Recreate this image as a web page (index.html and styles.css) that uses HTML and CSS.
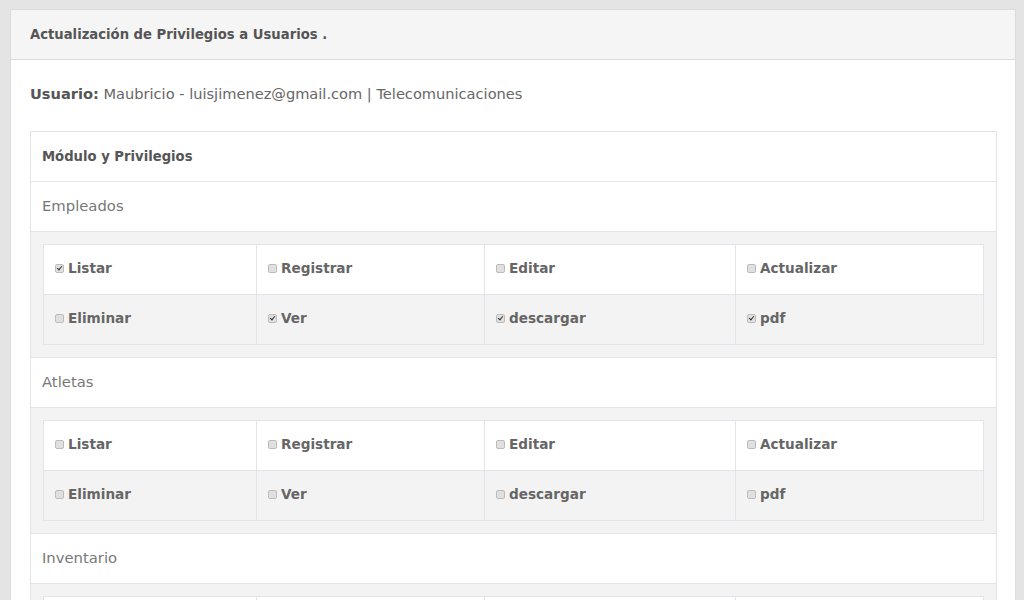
FILE: index.html
```html
<!DOCTYPE html>
<html lang="es">
<head>
<meta charset="utf-8">
<title>Actualización de Privilegios a Usuarios</title>
<link rel="stylesheet" href="styles.css">
</head>
<body>
<div class="panel">
  <div class="panel-heading">Actualización de Privilegios a Usuarios .</div>
  <div class="panel-body">
    <p class="user"><b>Usuario:</b> Maubricio - luisjimenez@gmail.com | Telecomunicaciones</p>
    <table class="modules">
      <tr><th>Módulo y Privilegios</th></tr>
      <tr><td class="mod">Empleados</td></tr>
      <tr><td class="nest">
        <table class="privs">
          <colgroup><col class="c1"><col class="c2"><col class="c3"><col class="c4"></colgroup>
          <tr>
            <td><span class="cb on"></span>Listar</td>
            <td><span class="cb"></span>Registrar</td>
            <td><span class="cb"></span>Editar</td>
            <td><span class="cb"></span>Actualizar</td>
          </tr>
          <tr>
            <td><span class="cb"></span>Eliminar</td>
            <td><span class="cb on"></span>Ver</td>
            <td><span class="cb on"></span>descargar</td>
            <td><span class="cb on"></span>pdf</td>
          </tr>
        </table>
      </td></tr>
      <tr><td class="mod">Atletas</td></tr>
      <tr><td class="nest">
        <table class="privs">
          <colgroup><col class="c1"><col class="c2"><col class="c3"><col class="c4"></colgroup>
          <tr>
            <td><span class="cb"></span>Listar</td>
            <td><span class="cb"></span>Registrar</td>
            <td><span class="cb"></span>Editar</td>
            <td><span class="cb"></span>Actualizar</td>
          </tr>
          <tr>
            <td><span class="cb"></span>Eliminar</td>
            <td><span class="cb"></span>Ver</td>
            <td><span class="cb"></span>descargar</td>
            <td><span class="cb"></span>pdf</td>
          </tr>
        </table>
      </td></tr>
      <tr><td class="mod">Inventario</td></tr>
      <tr><td class="nest">
        <table class="privs">
          <colgroup><col class="c1"><col class="c2"><col class="c3"><col class="c4"></colgroup>
          <tr>
            <td><span class="cb"></span>Listar</td>
            <td><span class="cb"></span>Registrar</td>
            <td><span class="cb"></span>Editar</td>
            <td><span class="cb"></span>Actualizar</td>
          </tr>
          <tr>
            <td><span class="cb"></span>Eliminar</td>
            <td><span class="cb"></span>Ver</td>
            <td><span class="cb"></span>descargar</td>
            <td><span class="cb"></span>pdf</td>
          </tr>
        </table>
      </td></tr>
    </table>
  </div>
</div>
</body>
</html>
```
FILE: styles.css
```css
html, body { margin: 0; padding: 0; }
body {
  background: #e4e4e4;
  font-family: "DejaVu Sans", "Open Sans", sans-serif;
  font-size: 14px;
  color: #666;
  padding: 9px 8px 0 10px;
  height: 600px;
  overflow: hidden;
  box-sizing: border-box;
}
.panel {
  background: #fff;
  border: 1px solid #dcdcdc;
}
.panel-heading {
  background: #f5f5f5;
  border-bottom: 1px solid #dcdcdc;
  height: 49px;
  line-height: 50px;
  padding: 0 19px;
  font-weight: 700;
  color: #555;
  font-size: 13.2px;
}
.panel-body {
  padding: 19px 19px 20px;
}
.user {
  margin: 0 0 22px;
  line-height: 30px;
  color: #666;
  font-size: 14.6px;
}
.user b { color: #555; }
table { border-collapse: collapse; }
.modules {
  width: 965px;
  border: 1px solid #e1e4e8;
}
.modules > tbody > tr > th,
.modules > tbody > tr > td {
  border-top: 1px solid #e1e4e8;
  text-align: left;
  padding: 0 11px 1px;
  height: 50px;
  box-sizing: border-box;
}
.modules th { font-weight: 700; color: #555; font-size: 13.2px; }
.modules td.mod { color: #777; font-weight: 400; font-size: 14.8px; padding-bottom: 2px; }
.modules > tbody > tr > td.nest {
  background: #f3f3f3;
  padding: 12px;
  height: auto;
}
.privs {
  width: 940px;
  table-layout: fixed;
  border: 1px solid #e1e4e8;
}
.privs .c1 { width: 213px; }
.privs .c2 { width: 228px; }
.privs .c3 { width: 251px; }
.privs .c4 { width: 248px; }
.privs td {
  border: 1px solid #e1e4e8;
  height: 50px;
  padding: 0 11px 3px;
  font-weight: 700;
  color: #666;
  font-size: 13.6px;
  box-sizing: border-box;
}
.privs tr:first-child td { background: #fff; }
.privs tr:nth-child(2) td { background: #f3f3f3; }
.cb {
  display: inline-block;
  width: 9px;
  height: 9px;
  box-sizing: border-box;
  border: 1px solid #bcbcbc;
  border-radius: 2px;
  background: #e0e0e0;
  margin-right: 4px;
  vertical-align: 0;
  position: relative;
}
.cb.on::after {
  content: "";
  position: absolute;
  left: 2px;
  top: 0px;
  width: 2px;
  height: 4px;
  border: solid #333;
  border-width: 0 1.5px 1.5px 0;
  transform: rotate(40deg);
}
```
